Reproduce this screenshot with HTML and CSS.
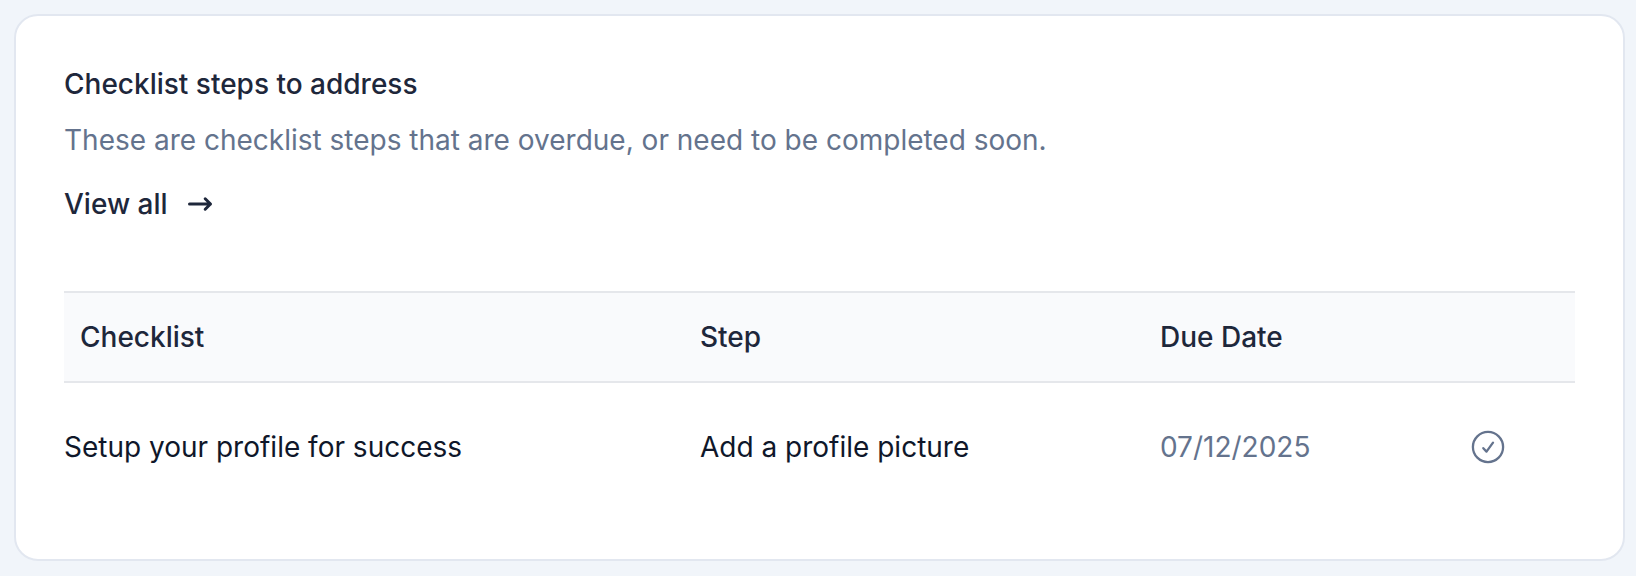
FILE: index.html
```
<!DOCTYPE html>
<html lang="en">
<head>
    <meta charset="UTF-8">
    <meta name="viewport" content="width=device-width, initial-scale=1.0">
    <title>Checklist steps</title>
    <link rel="stylesheet" href="styles.css">
</head>
<body>
    <main class="card">
        <h1>Checklist steps to address</h1>
        <p class="description">These are checklist steps that are overdue, or need to be completed soon.</p>
        <a class="view-all" href="#checklists">
            View all
            <svg class="arrow" viewBox="0 0 32 32" fill="none" stroke="currentColor" stroke-width="3" stroke-linecap="round" stroke-linejoin="round">
                <path d="M5.5 16H26.5M21.2 10.8L26.5 16L21.2 21.2"/>
            </svg>
        </a>

        <table class="steps">
            <thead>
                <tr>
                    <th class="col-checklist">Checklist</th>
                    <th class="col-step">Step</th>
                    <th class="col-date">Due Date</th>
                    <th class="col-action"></th>
                </tr>
            </thead>
            <tbody>
                <tr>
                    <td>Setup your profile for success</td>
                    <td>Add a profile picture</td>
                    <td class="date">07/12/2025</td>
                    <td class="action">
                        <svg class="check" viewBox="0 0 36 36" fill="none" stroke="currentColor" stroke-width="2.3" stroke-linecap="round" stroke-linejoin="round">
                            <circle cx="18" cy="18" r="15.1"/>
                            <path d="M13.3 19.2L16.5 22.6L23 13.6"/>
                        </svg>
                    </td>
                </tr>
            </tbody>
        </table>
    </main>
</body>
</html>
```

FILE: styles.css
```
* {
    margin: 0;
    padding: 0;
    box-sizing: border-box;
}

:root {
    --page-bg: #f1f5fa;
    --header-bg: #f9fafc;
    --border-color: #e2e7f0;
    --table-border: #e5e7eb;
    --dark-text: #1e273b;
    --muted-text: #64738d;
}

body {
    background-color: var(--page-bg);
    color: var(--dark-text);
    font-family: 'Inter', sans-serif;
    font-size: 28px;
    line-height: 40px;
}

/* Card */
.card {
    width: 1611px;
    height: 547px;
    margin: 14px 0 0 14px;
    padding: 48px;
    background-color: #fff;
    border: 2px solid var(--border-color);
    border-radius: 24px;
}

.card h1 {
    font-size: 28px;
    font-weight: 500;
}

.description {
    margin-top: 16px;
    color: var(--muted-text);
}

.view-all {
    display: flex;
    align-items: center;
    gap: 16px;
    margin-top: 24px;
    color: var(--dark-text);
    font-weight: 500;
    text-decoration: none;
}

.arrow {
    width: 32px;
    height: 32px;
}

/* Steps table */
.steps {
    width: 100%;
    margin-top: 67px;
    border-collapse: collapse;
    table-layout: fixed;
}

.steps th {
    height: 90px;
    background-color: var(--header-bg);
    border-top: 2px solid var(--table-border);
    border-bottom: 2px solid var(--table-border);
    font-weight: 500;
    text-align: left;
}

.steps td {
    height: 128px;
    color: #0f172a;
}

.steps .col-checklist {
    width: 636px;
    padding-left: 16px;
}

.col-step {
    width: 460px;
}

.col-date {
    width: 310px;
}

.steps .date,
.steps .action {
    color: var(--muted-text);
}

.check {
    display: block;
    width: 36px;
    height: 36px;
}
```
